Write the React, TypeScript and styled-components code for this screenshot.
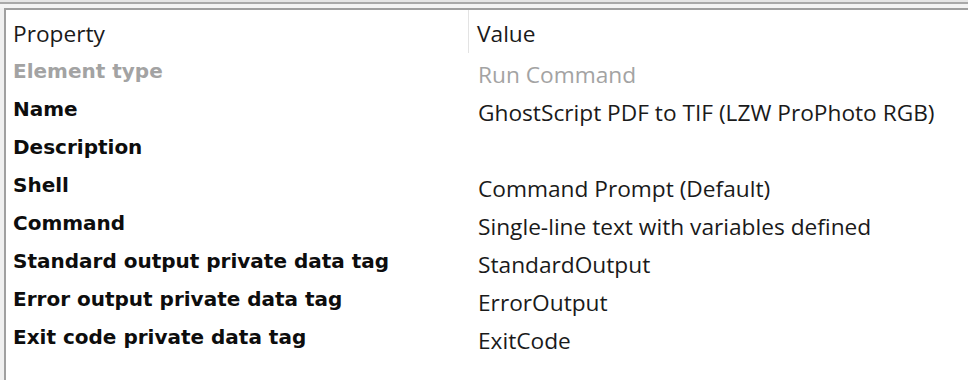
import React from 'react';
import styled, { createGlobalStyle } from 'styled-components';

const GlobalStyle = createGlobalStyle`
  html, body {
    margin: 0;
    padding: 0;
    background: #ffffff;
  }
`;

interface PropertyRow {
  label: string;
  value?: string;
  disabled?: boolean;
}

const rows: PropertyRow[] = [
  { label: 'Element type', value: 'Run Command', disabled: true },
  { label: 'Name', value: 'GhostScript PDF to TIF (LZW ProPhoto RGB)' },
  { label: 'Description' },
  { label: 'Shell', value: 'Command Prompt (Default)' },
  { label: 'Command', value: 'Single-line text with variables defined' },
  { label: 'Standard output private data tag', value: 'StandardOutput' },
  { label: 'Error output private data tag', value: 'ErrorOutput' },
  { label: 'Exit code private data tag', value: 'ExitCode' },
];

const Window = styled.div`
  width: 968px;
  height: 380px;
  overflow: hidden;
  background: #f0f0f0;
  display: flex;
  flex-direction: column;
`;

const TopChrome = styled.div`
  height: 8px;
  flex-shrink: 0;
  background: linear-gradient(
    to bottom,
    #e6e6e6 0px,
    #e6e6e6 2px,
    #a9a9a9 2px,
    #a9a9a9 4px,
    #f4f4f4 4px,
    #f4f4f4 8px
  );
`;

const Panel = styled.div`
  flex: 1;
  margin-left: 4px;
  background: #ffffff;
  border-top: 2px solid #a0a0a0;
  border-left: 2px solid #a0a0a0;
`;

const Grid = styled.div`
  display: grid;
  grid-template-columns: 463px 1fr;
`;

const HeaderCell = styled.div<{ $divider?: boolean }>`
  height: 43px;
  padding: 11px 0 0 ${({ $divider }) => ($divider ? '8px' : '7px')};
  box-sizing: border-box;
  border-right: ${({ $divider }) => ($divider ? 'none' : '1px solid #e3e3e3')};
  font-family: 'Open Sans', 'Noto Sans', sans-serif;
  font-size: 22.7px;
  line-height: 26px;
  color: #1a1a1a;
  white-space: nowrap;
`;

const LabelCell = styled.div<{ $disabled?: boolean }>`
  height: 38px;
  padding: 6px 0 0 7px;
  box-sizing: border-box;
  font-family: 'DejaVu Sans', 'Liberation Sans', sans-serif;
  font-weight: bold;
  font-size: 20px;
  line-height: 24px;
  color: ${({ $disabled }) => ($disabled ? '#a3a3a3' : '#0d0d0d')};
  white-space: nowrap;
`;

const ValueCell = styled.div<{ $disabled?: boolean }>`
  height: 38px;
  padding: 9px 0 0 9px;
  box-sizing: border-box;
  font-family: 'Open Sans', 'Noto Sans', sans-serif;
  font-size: 22.7px;
  line-height: 26px;
  color: ${({ $disabled }) => ($disabled ? '#a3a3a3' : '#1a1a1a')};
  white-space: nowrap;
`;

export default function App() {
  return (
    <>
      <GlobalStyle />
      <Window>
        <TopChrome />
        <Panel>
          <Grid>
            <HeaderCell>Property</HeaderCell>
            <HeaderCell $divider>Value</HeaderCell>
            {rows.map((row) => (
              <React.Fragment key={row.label}>
                <LabelCell $disabled={row.disabled}>{row.label}</LabelCell>
                <ValueCell $disabled={row.disabled}>{row.value ?? ''}</ValueCell>
              </React.Fragment>
            ))}
          </Grid>
        </Panel>
      </Window>
    </>
  );
}
